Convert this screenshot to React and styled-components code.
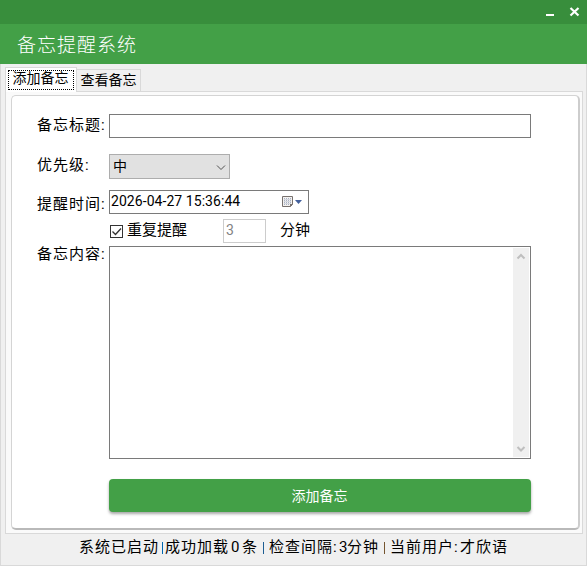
import { useState } from "react";
import styled, { createGlobalStyle } from "styled-components";

const GlobalStyle = createGlobalStyle`
  * {
    box-sizing: border-box;
  }
  body {
    margin: 0;
    overflow: hidden;
    font-family: Roboto, "Noto Sans CJK SC", sans-serif;
    font-size: 14px;
    color: #000;
  }
  input, button, textarea {
    font: inherit;
    margin: 0;
    outline: none;
    border-radius: 0;
    color: #000;
  }
`;

const Window = styled.div`
  width: 587px;
  height: 566px;
  display: flex;
  flex-direction: column;
  background: #f0f0f0;
`;

const TitleBar = styled.div`
  height: 24px;
  flex: none;
  display: flex;
  justify-content: flex-end;
  background: #388e3c;
`;

const WindowButton = styled.button`
  width: 24px;
  height: 24px;
  padding: 0;
  border: none;
  background: none;
  svg {
    display: block;
  }
`;

const Header = styled.h1`
  height: 40px;
  flex: none;
  margin: 0;
  padding-left: 17px;
  background: #43a047;
  color: #fff;
  font-family: "Noto Sans CJK SC", sans-serif;
  font-size: 19px;
  font-weight: 300;
  letter-spacing: 1px;
  line-height: 39px;
`;

const Body = styled.div`
  flex: 1;
  display: flex;
  flex-direction: column;
  padding: 3px 3px 0 4px;
  border: 1px solid #d9d9d9;
  border-top: none;
`;

const TabList = styled.div`
  height: 24px;
  display: flex;
  align-items: flex-end;
`;

const Tab = styled.button`
  width: ${(props) => (props.$active ? "72px" : "64px")};
  height: ${(props) => (props.$active ? "25px" : "22px")};
  margin-bottom: ${(props) => (props.$active ? "-1px" : "0")};
  padding: ${(props) => (props.$active ? "2px" : "0")};
  border: 1px solid #d9d9d9;
  border-bottom: none;
  border-left-width: ${(props) => (props.$active ? "1px" : "0")};
  background: ${(props) => (props.$active ? "#fff" : "#f0f0f0")};
  line-height: 21px;
  z-index: 1;
`;

const FocusRect = styled.span`
  display: block;
  height: 20px;
  padding-right: 1px;
  border: 1px dotted #000;
  line-height: 15px;
`;

const TabPane = styled.div`
  height: 443px;
  flex: none;
  padding: 3px;
  padding-left: 5px;
  border: 1px solid #d9d9d9;
  background: #fafafa;
`;

const Card = styled.form`
  width: 569px;
  height: 435px;
  padding: 18px 0 0 25px;
  border: 1px solid #d4d4d4;
  border-right: 2px solid #cdcdcd;
  border-bottom: 2px solid #b9b9b9;
  border-radius: 5px;
  background: #fff;
`;

const Row = styled.div`
  display: flex;
  height: ${(props) => props.$height}px;
`;

const Label = styled.label`
  width: 72px;
  flex: none;
  padding-top: ${(props) => props.$top || 0}px;
  font-size: 15px;
  letter-spacing: 1px;
  line-height: 20px;
  white-space: nowrap;
`;

const TitleInput = styled.input`
  width: 422px;
  height: 24px;
  padding: 0 3px;
  border: 1px solid #7a7a7a;
`;

const Select = styled.button`
  width: 121px;
  height: 25px;
  display: flex;
  justify-content: space-between;
  padding: 0 3px;
  border: 1px solid #adadad;
  background: #e1e1e1;
  line-height: 22px;
  svg {
    margin-top: 9px;
  }
`;

const DateField = styled.div`
  width: 200px;
  height: 24px;
  display: flex;
  justify-content: space-between;
  padding: 0 5px 0 1px;
  border: 1px solid #7a7a7a;
  letter-spacing: 0.06px;
  line-height: 21px;
`;

const Repeat = styled.label`
  width: 114px;
  height: 22px;
  display: flex;
  gap: 4px;
  padding-left: 1px;
  font-size: 15px;
  line-height: 22px;
`;

const CheckBox = styled.span`
  width: 13px;
  height: 13px;
  margin-top: 6px;
  border: 1px solid #333;
  svg {
    display: block;
  }
`;

const MinutesInput = styled.input`
  width: 43px;
  height: 24px;
  margin-right: 14px;
  padding: 0 2px 2px;
  border: 1px solid #ccc;
  background: #fff;
  color: #838383;
`;

const Unit = styled.span`
  font-size: 15px;
  line-height: 22px;
`;

const MemoBox = styled.div`
  width: 422px;
  height: 213px;
  display: flex;
  padding: 1px;
  border: 1px solid #7a7a7a;
`;

const MemoText = styled.textarea`
  flex: 1;
  border: none;
  resize: none;
`;

const ScrollBar = styled.div`
  width: 16px;
  display: flex;
  flex-direction: column;
  justify-content: space-between;
  background: #f0f0f0;
`;

const SubmitButton = styled.button`
  width: 422px;
  height: 33px;
  margin: 0 0 0 72px;
  padding: 0 1px 2px 0;
  border: none;
  border-radius: 4px;
  background: #43a047;
  box-shadow: 0 2px 3px rgba(0, 0, 0, 0.35);
  color: #fff;
`;

const StatusBar = styled.div`
  height: 31px;
  display: flex;
  padding-left: 74px;
  font-size: 15px;
  letter-spacing: 1px;
  line-height: 27px;
  white-space: nowrap;
`;

const StatusItem = styled.span`
  width: ${(props) => props.$width}px;
  flex: none;
`;

const Divider = styled.span`
  width: 1px;
  height: 12px;
  margin: 8px ${(props) => props.$after}px 0 0;
  background: ${(props) => props.$color};
`;

const ScrollArrow = ({ down }) => (
  <svg width="16" height="17" viewBox="0 0 16 17">
    <path
      d={down ? "M4.5 7 8 10.5l3.5-3.5" : "M4.5 10.5 8 7l3.5 3.5"}
      fill="none"
      stroke="#bfbfbf"
      strokeWidth="2"
    />
  </svg>
);

const CalendarIcon = () => (
  <svg width="22" height="22" viewBox="0 0 22 22">
    <path d="M1.5 5.5h10v8l-2 2h-8z" fill="#f4f2f0" stroke="#77716e" />
    <path d="M9 16v-3h3z" fill="#77716e" />
    <path
      d="M3 7.5h7M3 9.5h7M3 11.5h7M3 13.5h5"
      stroke="#a9b2c5"
      strokeDasharray="1 1"
    />
    <path d="M3 8.5h7M3 10.5h7M3 12.5h7" stroke="#d5d8df" />
    <path d="M14 9h7l-3.5 4z" fill="#43609c" />
  </svg>
);

const App = () => {
  const [title, setTitle] = useState("");
  const [content, setContent] = useState("");
  const [repeat, setRepeat] = useState(true);

  return (
    <>
      <GlobalStyle />
      <Window>
        <TitleBar>
          <WindowButton aria-label="minimize">
            <svg width="24" height="24">
              <path d="M7 14h8v2H7z" fill="#fff" />
            </svg>
          </WindowButton>
          <WindowButton aria-label="close">
            <svg width="24" height="24">
              <path d="M7.5 8l8 7.5M15.5 8l-8 7.5" stroke="#fff" strokeWidth="2.2" />
            </svg>
          </WindowButton>
        </TitleBar>
        <Header>备忘提醒系统</Header>
        <Body>
          <TabList>
            <Tab $active>
              <FocusRect>添加备忘</FocusRect>
            </Tab>
            <Tab>查看备忘</Tab>
          </TabList>
          <TabPane>
            <Card onSubmit={(e) => e.preventDefault()}>
              <Row $height={40}>
                <Label $top={1}>备忘标题:</Label>
                <TitleInput
                  value={title}
                  onChange={(e) => setTitle(e.target.value)}
                />
              </Row>
              <Row $height={36}>
                <Label $top={1}>优先级:</Label>
                <Select type="button">
                  中
                  <svg width="10" height="7" viewBox="0 0 10 7">
                    <path d="M1 1.5l4 4 4-4" fill="none" stroke="#505050" />
                  </svg>
                </Select>
              </Row>
              <Row $height={29}>
                <Label $top={4}>提醒时间:</Label>
                <DateField>
                  2026-04-27 15:36:44
                  <CalendarIcon />
                </DateField>
              </Row>
              <Row $height={27}>
                <Label />
                <Repeat onClick={() => setRepeat(!repeat)}>
                  <CheckBox>
                    {repeat && (
                      <svg width="11" height="11" viewBox="0 0 11 11">
                        <path
                          d="M1.5 5.5l3 3 5.5-6"
                          fill="none"
                          stroke="#333"
                          strokeWidth="1.3"
                        />
                      </svg>
                    )}
                  </CheckBox>
                  重复提醒
                </Repeat>
                <MinutesInput disabled value="3" />
                <Unit>分钟</Unit>
              </Row>
              <Row $height={233}>
                <Label as="div">
                  <MemoLabel>备忘内容:</MemoLabel>
                </Label>
                <MemoBox>
                  <MemoText
                    value={content}
                    onChange={(e) => setContent(e.target.value)}
                  />
                  <ScrollBar>
                    <ScrollArrow />
                    <ScrollArrow down />
                  </ScrollBar>
                </MemoBox>
              </Row>
              <SubmitButton>添加备忘</SubmitButton>
            </Card>
          </TabPane>
          <StatusBar>
            <StatusItem $width={83}>系统已启动</StatusItem>
            <Divider $color="#0067b0" $after={2} />
            <StatusItem $width={66}>成功加载</StatusItem>
            <StatusItem $width={11}>0</StatusItem>
            <StatusItem $width={21}>条</StatusItem>
            <Divider $color="#1d5d92" $after={5} />
            <StatusItem $width={70}>检查间隔:</StatusItem>
            <StatusItem $width={8}>3</StatusItem>
            <StatusItem $width={37}>分钟</StatusItem>
            <Divider $color="#75552f" $after={5} />
            <StatusItem $width={70}>当前用户:</StatusItem>
            <StatusItem $width={48}>才欣语</StatusItem>
          </StatusBar>
        </Body>
      </Window>
    </>
  );
};

// sits a little above the top line of the memo box text
const MemoLabel = styled.label`
  display: block;
  margin-top: -2px;
`;

export default App;
